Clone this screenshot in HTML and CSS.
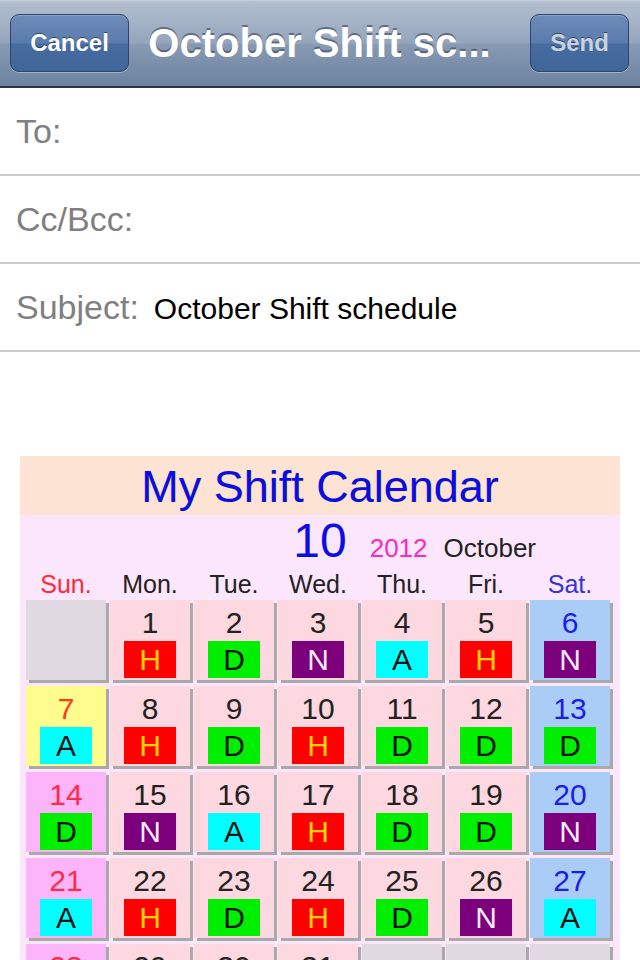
FILE: index.html
```html
<!DOCTYPE html>
<html>
<head>
<meta charset="utf-8"/>
<title>October Shift schedule</title>
<link rel="stylesheet" href="styles.css">
</head>

<body>
<div class="navbar">
  <button class="barbtn cancel">Cancel</button>
  <div class="navtitle">October Shift sc...</div>
  <button class="barbtn send">Send</button>
</div>

<div class="field"><span class="label">To:</span></div>
<div class="field"><span class="label">Cc/Bcc:</span></div>
<div class="field"><span class="label">Subject:</span><span class="value">October Shift schedule</span></div>

<div class="cal">
  <div class="cal-title">My Shift Calendar</div>

  <div class="cal-month">
    <span></span>
    <span class="month-num">10</span>
    <span class="month-info"><span class="year">2012</span><span class="month-name">October</span></span>
  </div>

  <div class="weekdays">
    <span class="sun">Sun.</span>
    <span>Mon.</span>
    <span>Tue.</span>
    <span>Wed.</span>
    <span>Thu.</span>
    <span>Fri.</span>
    <span class="sat">Sat.</span>
  </div>

  <div class="days">
    <!-- week 1 -->
    <div class="day empty"></div>
    <div class="day"><span class="num">1</span><span class="shift h">H</span></div>
    <div class="day"><span class="num">2</span><span class="shift d">D</span></div>
    <div class="day"><span class="num">3</span><span class="shift n">N</span></div>
    <div class="day"><span class="num">4</span><span class="shift a">A</span></div>
    <div class="day"><span class="num">5</span><span class="shift h">H</span></div>
    <div class="day sat"><span class="num">6</span><span class="shift n">N</span></div>
    <!-- week 2 -->
    <div class="day hol"><span class="num">7</span><span class="shift a">A</span></div>
    <div class="day"><span class="num">8</span><span class="shift h">H</span></div>
    <div class="day"><span class="num">9</span><span class="shift d">D</span></div>
    <div class="day"><span class="num">10</span><span class="shift h">H</span></div>
    <div class="day"><span class="num">11</span><span class="shift d">D</span></div>
    <div class="day"><span class="num">12</span><span class="shift d">D</span></div>
    <div class="day sat"><span class="num">13</span><span class="shift d">D</span></div>
    <!-- week 3 -->
    <div class="day sun"><span class="num">14</span><span class="shift d">D</span></div>
    <div class="day"><span class="num">15</span><span class="shift n">N</span></div>
    <div class="day"><span class="num">16</span><span class="shift a">A</span></div>
    <div class="day"><span class="num">17</span><span class="shift h">H</span></div>
    <div class="day"><span class="num">18</span><span class="shift d">D</span></div>
    <div class="day"><span class="num">19</span><span class="shift d">D</span></div>
    <div class="day sat"><span class="num">20</span><span class="shift n">N</span></div>
    <!-- week 4 -->
    <div class="day sun"><span class="num">21</span><span class="shift a">A</span></div>
    <div class="day"><span class="num">22</span><span class="shift h">H</span></div>
    <div class="day"><span class="num">23</span><span class="shift d">D</span></div>
    <div class="day"><span class="num">24</span><span class="shift h">H</span></div>
    <div class="day"><span class="num">25</span><span class="shift d">D</span></div>
    <div class="day"><span class="num">26</span><span class="shift n">N</span></div>
    <div class="day sat"><span class="num">27</span><span class="shift a">A</span></div>
    <!-- week 5 -->
    <div class="day sun"><span class="num">28</span></div>
    <div class="day"><span class="num">29</span></div>
    <div class="day"><span class="num">30</span></div>
    <div class="day"><span class="num">31</span></div>
    <div class="day empty"></div>
    <div class="day empty"></div>
    <div class="day empty"></div>
  </div>
</div>

</body>
</html>
```

FILE: styles.css
```css
body {
   margin: 0;
   background-color: white;
   font-family: "Liberation Sans", Arial, sans-serif;
}

/* top bar */

.navbar {
   display: grid;
   grid-template-columns: 1fr auto 1fr;
   align-items: center;
   height: 86px;
   padding: 0 11px 0 10px;
   background: linear-gradient(to bottom, #cbd3de 0, #b3bfcf 2px, #94a5bc 50%, #889ab3 52%, #6c83a1 100%);
   border-bottom: 2px solid #2c3038;
}

.barbtn {
   height: 58px;
   border: 1px solid #2e4468;
   border-radius: 9px;
   background: linear-gradient(to bottom, #6d8cb9 0%, #5a7cad 50%, #476ca1 52%, #3f6599 100%);
   box-shadow: 0 1px 0 rgba(255, 255, 255, 0.35), inset 0 1px 0 rgba(255, 255, 255, 0.2);
   font-family: "Liberation Sans", Arial, sans-serif;
   font-weight: bold;
   font-size: 24px;
   text-shadow: 0 -1px 0 rgba(0, 0, 0, 0.45);
   padding: 0;
}

.cancel {
   justify-self: start;
   width: 119px;
   color: white;
}

.send {
   justify-self: end;
   width: 99px;
   color: #c9d2df;
}

.navtitle {
   font-size: 40px;
   font-weight: bold;
   color: white;
   white-space: nowrap;
   text-shadow: 0 -2px 0 rgba(45, 55, 75, 0.55);
   padding: 0 8px;
}

/* header fields */

.field {
   display: flex;
   align-items: baseline;
   height: 86px;
   line-height: 86px;
   padding-left: 16px;
   border-bottom: 2px solid #cbcbcb;
}

.label {
   font-size: 34px;
   color: #808080;
}

.value {
   font-size: 30px;
   color: black;
   margin-left: 15px;
}

/* calendar picture */

.cal {
   width: 600px;
   margin: 104px 20px 0;
   background-color: #fce6fc;
   padding-bottom: 20px;
}

.cal-title {
   height: 59px;
   line-height: 62px;
   background-color: #fde3d4;
   text-align: center;
   font-size: 45px;
   color: #0c0ce8;
   text-shadow: 0 0 1px rgba(190, 220, 0, 0.7);
}

.cal-month {
   display: grid;
   grid-template-columns: 1fr auto 1fr;
   align-items: baseline;
   height: 52px;
   line-height: 52px;
}

.month-num {
   font-size: 48px;
   color: #0c0ce8;
}

.month-info {
   display: flex;
   align-items: baseline;
   gap: 16px;
   padding-left: 23px;
}

.year {
   font-size: 26px;
   color: #f52bc2;
}

.month-name {
   font-size: 26px;
   color: #222;
}

.weekdays, .days {
   display: grid;
   grid-template-columns: repeat(7, 80px);
   column-gap: 4px;
   padding: 0 6px;
}

.weekdays {
   padding-top: 2px;
   padding-bottom: 1px;
   height: 30px;
   line-height: 30px;
   font-size: 25px;
   color: #222;
   text-align: center;
}

.weekdays .sun {
   color: #ff2a3c;
}

.weekdays .sat {
   color: #3434de;
}

.days {
   row-gap: 6px;
}

.day {
   height: 80px;
   background-color: #fdd8e0;
   box-shadow: 3px 3px 0 #a9a9a9;
   text-align: center;
}

.day.sat {
   background-color: #aacdf8;
}

.day.sun {
   background-color: #fcb5f8;
}

.day.hol {
   background-color: #fefc8c;
}

.day.empty {
   background-color: #e1d9e2;
}

.num {
   display: block;
   padding-top: 5px;
   line-height: 36px;
   font-size: 30px;
   color: #222;
}

.sat .num {
   color: #1c1cec;
}

.sun .num {
   color: #ff2a48;
}

.hol .num {
   color: #ff3b1c;
}

.shift {
   display: block;
   width: 52px;
   height: 37px;
   margin: 0 auto;
   line-height: 38px;
   font-size: 30px;
}

.shift.h {
   background-color: #ff0000;
   color: #ffd200;
}

.shift.d {
   background-color: #00ee00;
   color: #111;
}

.shift.n {
   background-color: #7c007c;
   color: #f8ecff;
}

.shift.a {
   background-color: #00ffff;
   color: #111;
}
```
